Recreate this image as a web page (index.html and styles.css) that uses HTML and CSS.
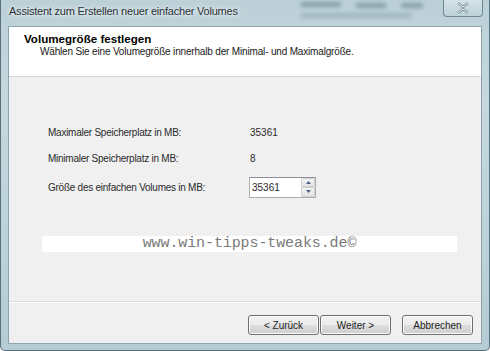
FILE: index.html
```html
<!DOCTYPE html>
<html lang="de">
<head>
  <meta charset="UTF-8">
  <title>Assistent zum Erstellen neuer einfacher Volumes</title>
  <link rel="stylesheet" href="styles.css">
</head>
<body>
  <div class="window">
    <div class="glass">
      <span class="blob b1"></span>
      <span class="blob b2"></span>
      <span class="blob b3"></span>
      <span class="blob b4"></span>
    </div>
    <div class="titlebar">
      <span class="title">Assistent zum Erstellen neuer einfacher Volumes</span>
      <div class="close">
        <svg width="14" height="12" viewBox="0 0 14 12">
          <path d="M2 1 L7 5 L12 1 M2 11 L7 7 L12 11" fill="none" stroke="#7f8d94" stroke-width="2.4"/>
          <path d="M2 1 L7 5 L12 1 M2 11 L7 7 L12 11" fill="none" stroke="#f4f8f9" stroke-width="1"/>
        </svg>
      </div>
    </div>

    <div class="client">
      <div class="header">
        <div class="heading">Volumegröße festlegen</div>
        <div class="subheading">Wählen Sie eine Volumegröße innerhalb der Minimal- und Maximalgröße.</div>
      </div>

      <div class="content">
        <div class="row">
          <span class="label">Maximaler Speicherplatz in MB:</span>
          <span class="value">35361</span>
        </div>
        <div class="row">
          <span class="label">Minimaler Speicherplatz in MB:</span>
          <span class="value">8</span>
        </div>
        <div class="row row-input">
          <span class="label">Größe des einfachen Volumes in MB:</span>
          <div class="spin">
            <span class="spin-text">35361</span>
            <div class="spin-btns">
              <span class="arrow">
                <svg width="5" height="3" viewBox="0 0 5 3"><path d="M0 3 L2.5 0 L5 3Z" fill="#4d6185"/></svg>
              </span>
              <span class="arrow">
                <svg width="5" height="3" viewBox="0 0 5 3"><path d="M0 0 L2.5 3 L5 0Z" fill="#4d6185"/></svg>
              </span>
            </div>
          </div>
        </div>

        <div class="watermark">www.win-tipps-tweaks.de©</div>
      </div>

      <div class="footer">
        <button class="btn">&lt; Zurück</button>
        <button class="btn btn-next">Weiter &gt;</button>
        <button class="btn btn-cancel">Abbrechen</button>
      </div>
    </div>
  </div>
</body>
</html>
```

FILE: styles.css
```css
html, body {
  margin: 0;
  padding: 0;
}
body {
  width: 490px;
  height: 351px;
  overflow: hidden;
  font-family: "Liberation Sans", Arial, sans-serif;
  color: #1e1e1e;
}
.window {
  position: relative;
  width: 490px;
  height: 351px;
  box-sizing: border-box;
  padding: 0 7px 6px 7px;
  display: flex;
  flex-direction: column;
  background: linear-gradient(180deg, #bcd0d8 0%, #c6d8de 30%, #b5ccd4 100%);
  border: 1px solid #56707c;
  border-top: none;
  border-radius: 0 0 5px 5px;
  overflow: hidden;
}

/* blurred aero glass behind the title bar */
.glass {
  position: absolute;
  left: 0;
  top: 0;
  right: 0;
  height: 26px;
  overflow: hidden;
}
.blob {
  position: absolute;
  height: 5px;
  background: #5b7580;
  filter: blur(2px);
  opacity: 0.55;
}
.b1 { left: 300px; top: 2px; width: 40px; }
.b2 { left: 355px; top: 3px; width: 30px; }
.b3 { left: 400px; top: 3px; width: 22px; }
.b4 { left: 300px; top: 13px; width: 110px; opacity: 0.3; }

.titlebar {
  position: relative;
  height: 26px;
  display: flex;
  justify-content: space-between;
  align-items: flex-start;
}
.title {
  margin-top: 5px;
  margin-left: 1px;
  font-size: 11px;
  letter-spacing: -0.22px;
  color: #2b3033;
  text-shadow: 0 0 6px #eef5f7, 0 0 3px #eef5f7;
}
.close {
  width: 38px;
  height: 16px;
  margin-right: -1px;
  border: 1px solid #6f8891;
  border-top: none;
  border-radius: 0 0 4px 4px;
  background: linear-gradient(180deg, #d4e3e8, #bcd2d9);
  display: flex;
  align-items: center;
  justify-content: center;
}

.client {
  flex: 1;
  display: flex;
  flex-direction: column;
  background: #f0f0f0;
  border: 1px solid #8ea4ad;
}
.header {
  height: 50px;
  background: #fff;
  border-bottom: 1px solid #d7d7d7;
  box-sizing: border-box;
  padding: 5px 0 0 15px;
  font-size: 10px;
}
.heading {
  font-weight: bold;
  font-size: 11.6px;
  color: #000;
}
.subheading {
  margin-top: 1px;
  padding-left: 16px;
  letter-spacing: -0.17px;
  color: #202020;
}

.content {
  flex: 1;
  padding: 42px 0 0 39px;
  font-size: 10px;
  color: #2a2a2a;
}
.row {
  display: flex;
  align-items: center;
  height: 26px;
}
.row-input {
  height: 32px;
}
.label {
  width: 202px;
  letter-spacing: -0.25px;
}
.spin {
  width: 67px;
  height: 21px;
  border: 1px solid #abadb3;
  border-top-color: #8e9199;
  background: #fff;
  display: flex;
  align-items: center;
  justify-content: space-between;
  box-sizing: border-box;
  margin-left: -1px;
}
.spin-text {
  padding-left: 2px;
}
.spin-btns {
  width: 14px;
  height: 19px;
  display: flex;
  flex-direction: column;
}
.arrow {
  flex: 1;
  display: flex;
  align-items: center;
  justify-content: center;
  background: linear-gradient(180deg, #f4f4f4, #e4e4e4);
  border: 1px solid #d0d0d0;
  border-radius: 1px;
}
.watermark {
  margin: 33px 0 0 -6px;
  width: 415px;
  height: 16px;
  background: #fff;
  text-align: center;
  font-family: "Liberation Mono", "Courier New", monospace;
  font-size: 15px;
  line-height: 16px;
  color: #7a7a7a;
  letter-spacing: -0.1px;
}

.footer {
  height: 42px;
  border-top: 1px solid #dcdcdc;
  box-shadow: inset 0 1px 0 #fff;
  display: flex;
  justify-content: flex-end;
  align-items: flex-start;
  padding: 13px 8px 0 0;
  box-sizing: border-box;
}
.btn {
  width: 71px;
  height: 20px;
  margin: 0;
  padding: 0;
  font-family: "Liberation Sans", Arial, sans-serif;
  font-size: 10px;
  color: #1e1e1e;
  border: 1px solid #707070;
  border-radius: 3px;
  background: linear-gradient(180deg, #f2f2f2 0%, #ebebeb 48%, #dddddd 52%, #cfcfcf 100%);
  box-shadow: inset 0 0 0 1px #fbfbfb;
}
.btn-next {
  margin-left: 1px;
}
.btn-cancel {
  margin-left: 11px;
}
```
